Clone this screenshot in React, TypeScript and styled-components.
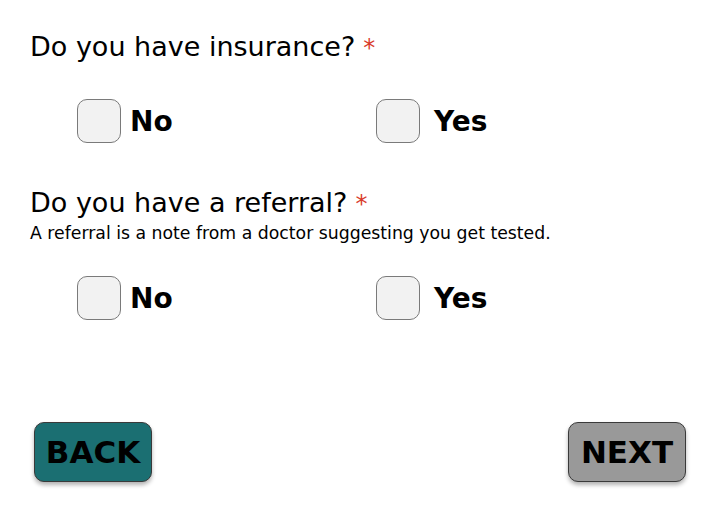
import React from "react";
import styled, { createGlobalStyle } from "styled-components";

const Global = createGlobalStyle`
  html, body { margin: 0; padding: 0; background: #fff; }
  body { font-family: "DejaVu Sans", "Noto Sans", sans-serif; color: #000; }
`;

const Page = styled.div`
  width: 720px;
  height: 512px;
  box-sizing: border-box;
  display: flex;
  flex-direction: column;
  padding: 29px 34px 0 30px;
`;

const Question = styled.div<{ $top: number }>`
  margin-top: ${(p) => p.$top}px;
  display: flex;
  flex-direction: column;
`;

const Title = styled.div`
  font-size: 27px;
  line-height: 36px;
  font-weight: 400;
`;

const Star = styled.span`
  color: #d93a2b;
  font-size: 24px;
  margin-left: 8px;
`;

const Hint = styled.div`
  font-size: 17.3px;
  line-height: 22px;
`;

const Options = styled.div<{ $top: number }>`
  display: grid;
  grid-template-columns: 299px 299px;
  margin-top: ${(p) => p.$top}px;
  padding-left: 47px;
`;

const Option = styled.label`
  display: flex;
  align-items: center;
  gap: 9px;
  cursor: pointer;
`;

const Box = styled.span`
  width: 42px;
  height: 42px;
  border: 1px solid #7a7a7a;
  border-radius: 10px;
  background: #f2f2f2;
  flex: none;
`;

const OptionText = styled.span<{ $shift: number }>`
  font-size: 28px;
  font-weight: 700;
  margin-left: ${(p) => p.$shift}px;
`;

const Footer = styled.div`
  margin-top: auto;
  margin-bottom: 30px;
  display: flex;
  justify-content: space-between;
  padding-left: 4px;
`;

const Button = styled.button<{ $bg: string }>`
  width: 118px;
  height: 60px;
  box-sizing: border-box;
  border: 1px solid #3a3a3a;
  border-radius: 10px;
  background: ${(p) => p.$bg};
  box-shadow: 0 3px 4px rgba(0, 0, 0, 0.3);
  font-family: inherit;
  font-size: 31px;
  font-weight: 700;
  color: #000;
  padding: 0;
  display: flex;
  align-items: center;
  justify-content: center;
`;

const Choice = ({ label, shift = 0 }: { label: string; shift?: number }) => (
  <Option>
    <Box />
    <OptionText $shift={shift}>{label}</OptionText>
  </Option>
);

export default function App() {
  return (
    <>
      <Global />
      <Page>
        <Question $top={0}>
          <Title>
            Do you have insurance?<Star>*</Star>
          </Title>
        </Question>
        <Options $top={33}>
          <Choice label="No" />
          <Choice label="Yes" shift={5} />
        </Options>
        <Question $top={42}>
          <Title>
            Do you have a referral?<Star>*</Star>
          </Title>
          <Hint>A referral is a note from a doctor suggesting you get tested.</Hint>
        </Question>
        <Options $top={32}>
          <Choice label="No" />
          <Choice label="Yes" shift={5} />
        </Options>
        <Footer>
          <Button $bg="#1b6f72">BACK</Button>
          <Button $bg="#999999">NEXT</Button>
        </Footer>
      </Page>
    </>
  );
}
